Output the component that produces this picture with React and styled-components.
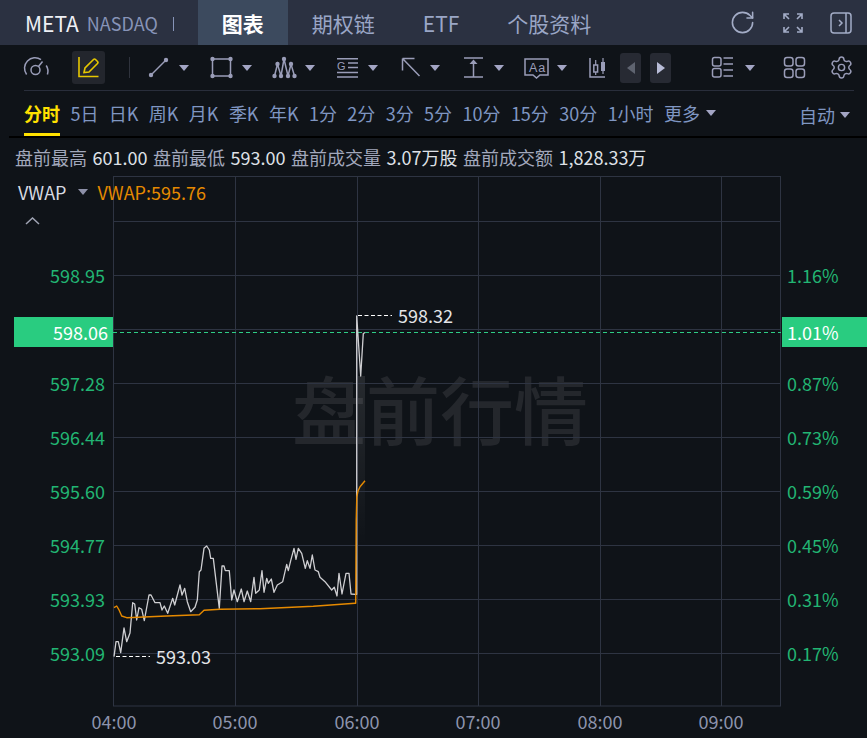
import React from "react";
import styled, { createGlobalStyle } from "styled-components";
import { RotateCw, Settings } from "lucide-react";

const GlobalStyle = createGlobalStyle`
  html, body {
    margin: 0;
    padding: 0;
    background: #0f1318;
  }
  body {
    font-family: "Noto Sans CJK SC", "Noto Sans", sans-serif;
  }
`;

const Page = styled.div`
  width: 867px;
  height: 738px;
  overflow: hidden;
  background: #0f1318;
`;

const TopBar = styled.div`
  height: 45px;
  display: flex;
  align-items: center;
  background: #2b3141;
  padding-left: 25px;
`;

const Symbol = styled.span`
  font-size: 21px;
  color: #eef0f5;
`;

const Market = styled.span`
  font-size: 18px;
  color: #8794b8;
  margin-left: 8px;
`;

const Divider = styled.span`
  width: 1px;
  height: 14px;
  background: #8794b8;
  margin: 2px 24px 0 15px;
`;

const Tab = styled.div`
  height: 45px;
  padding: 0 24px;
  display: flex;
  align-items: center;
  font-size: 21px;
  font-weight: ${(props) => (props.$active ? 700 : 400)};
  color: ${(props) => (props.$active ? "#ffffff" : "#9aa6c6")};
  background: ${(props) => (props.$active ? "#3c4a5e" : "transparent")};
`;

const TopIcons = styled.div`
  margin-left: auto;
  display: flex;
  align-items: center;
  gap: 27px;
  padding-right: 15px;
  color: #a3acc6;
`;

const Toolbar = styled.div`
  height: 45px;
  display: flex;
  align-items: center;
  padding-left: 23px;
  color: #9a9db8;
`;

const ToolSvg = styled.svg`
  display: block;
  flex: none;
  margin-left: ${(props) => props.$gap || 0}px;
`;

const ActiveTool = styled.div`
  width: 33px;
  height: 33px;
  flex: none;
  margin-left: 22px;
  border-radius: 3px;
  background: #23262d;
  color: #e6c700;
`;

const ToolSep = styled.span`
  width: 1px;
  height: 21px;
  flex: none;
  margin-left: 24px;
  background: #2f333d;
`;

const Caret = styled.span`
  flex: none;
  width: 0;
  height: 0;
  margin-left: ${(props) => props.$gap || 0}px;
  border-left: 5px solid transparent;
  border-right: 5px solid transparent;
  border-top: 6px solid ${(props) => props.$color || "#a3a5c4"};
`;

const StepButton = styled.div`
  width: 21px;
  height: 30px;
  flex: none;
  margin-left: ${(props) => props.$gap}px;
  display: flex;
  align-items: center;
  justify-content: center;
  border-radius: 3px;
  background: #272a33;
`;

const StepArrow = styled.span`
  width: 0;
  height: 0;
  border-top: 6.5px solid transparent;
  border-bottom: 6.5px solid transparent;
  border-right: ${(props) => (props.$left ? "8px solid #5f6470" : "none")};
  border-left: ${(props) => (props.$left ? "none" : "8px solid #b9bdd8")};
`;

const PeriodRow = styled.div`
  position: relative;
  height: 46px;
  display: flex;
  align-items: center;
  padding: 0 17px 0 24px;
  gap: 10.4px;
  font-size: 18px;
  color: #7f96c2;

  &::before {
    content: "";
    position: absolute;
    top: 0;
    left: 24px;
    right: 13px;
    height: 1px;
    background: #292e3b;
  }
`;

const Period = styled.div`
  height: 46px;
  line-height: 46px;
  box-sizing: border-box;
  white-space: nowrap;
  color: ${(props) => (props.$active ? "#ffe100" : "inherit")};
  font-weight: ${(props) => (props.$active ? 700 : 400)};
  border-bottom: 3px solid ${(props) => (props.$active ? "#ffe100" : "transparent")};
`;

const AutoSwitch = styled.div`
  margin-left: auto;
  display: flex;
  align-items: center;
  gap: 5px;
  padding-top: 3px;
`;

const Rule = styled.div`
  height: 2px;
  margin-left: 9px;
  background: #000000;
`;

const InfoRow = styled.div`
  height: 38px;
  display: flex;
  align-items: center;
  padding-left: 15px;
  font-size: 18px;
  white-space: nowrap;
  color: #a2a8bc;
`;

const InfoValue = styled.span`
  color: #dfe1e7;
  margin: 0 5.5px;
`;

const ChartPanel = styled.div`
  position: relative;
  height: 562px;
`;

const ChartSvg = styled.svg`
  display: block;
`;

const AxisText = styled.text`
  font-size: 18px;
  fill: ${(props) => props.$fill || "#22b573"};
  dominant-baseline: central;
`;

const Watermark = styled.text`
  font-size: 74px;
  font-weight: 500;
  letter-spacing: 0;
  fill: #24272c;
  dominant-baseline: central;
`;

const Legend = styled.div`
  position: absolute;
  top: 3px;
  left: 18px;
  display: flex;
  align-items: center;
  font-size: 18px;
  color: #d8dbe2;
`;

const LegendValue = styled.span`
  color: #e68a00;
  margin-left: 10px;
`;

const Collapse = styled.svg`
  position: absolute;
  top: 41px;
  left: 25px;
`;

const PriceBadge = styled.div`
  position: absolute;
  top: 141px;
  height: 30px;
  display: flex;
  align-items: center;
  font-size: 18px;
  color: #ffffff;
  background: #29cc80;
  box-sizing: border-box;
  left: ${(props) => props.$left}px;
  width: ${(props) => props.$width}px;
  justify-content: ${(props) => (props.$end ? "flex-end" : "flex-start")};
  padding: ${(props) => (props.$end ? "0 5px 0 0" : "0 0 0 5px")};
`;

const tabs = ["期权链", "ETF", "个股资料"];
const periods = ["5日", "日K", "周K", "月K", "季K", "年K", "1分", "2分", "3分", "5分", "10分", "15分", "30分", "1小时"];
const prices = [["598.95", 275], ["597.28", 383], ["596.44", 437], ["595.60", 491], ["594.77", 545], ["593.93", 599], ["593.09", 653]];
const percents = [["1.16%", 275], ["0.87%", 383], ["0.73%", 437], ["0.59%", 491], ["0.45%", 545], ["0.31%", 599], ["0.17%", 653]];
const gridY = [221, 275, 329, 383, 437, 491, 545, 599, 653];
const gridX = [235, 357, 478, 600, 721];
const times = [["04:00", 114], ["05:00", 235], ["06:00", 357], ["07:00", 478], ["08:00", 600], ["09:00", 721]];

const whiteLine =
  "114,656.7 116,641.7 118.3,641.7 120.7,652.7 124,628 126.7,641.7 130,633 132.7,602.7 134.7,604 136.7,620 139,607.7 141.7,609.3 144.3,620.7 149,595 151,595 155,602.7 160,602.7 162,610 164.3,606 167.7,613.3 172.7,598.3 174.7,605 180,585 182,595 184.7,588.3 187.3,601.7 190.7,611.7 195,607.3 197.3,600 199.3,571.7 201,570 204,548.3 206.7,546 209.3,550 210.7,558.3 213.3,558.3 219.3,608.3 222,566 224,566 225.3,570.7 229.3,570.7 231.7,600 234,590 237.3,601.7 241.3,589 244,601.7 247.3,591 250.7,601.7 254,577.3 255.7,593.3 259.3,590 262,570.7 264,592.3 266.7,578.3 268.3,583.3 271.3,579 274,592.3 277.3,585 282.7,581.7 286.7,564.3 288.3,570.7 290.7,560.7 294,548.3 296,559.3 298.3,548.3 301.7,553.3 305.3,568.3 307.3,560.7 310,568.3 312.3,555 315,570 318.3,571.7 320,577.3 325,581.7 331.7,590 334.3,587.3 337,596 339,573.3 342,594 346,573.3 349,573.3 351,594 355.5,594.3 356.7,594.3 356.7,316 360.7,376 363.3,333.5 365,332.7";
const vwapLine =
  "114,607.7 116.7,606 118.7,609.3 121.7,616 126.7,617.7 166.7,616 199.3,614.7 204,610.3 220,609.3 260,608.7 313.3,606.3 355,603.3 355.7,603.3 356.2,520 356.8,497 358,491 360,486.7 365,480.7";

const Icon = ({ x, w, gap, children }) => (
  <ToolSvg $gap={gap} width={w} height={45} viewBox={`${x} 45 ${w} 45`} fill="none" stroke="currentColor" strokeWidth="1.5">
    {children}
  </ToolSvg>
);

const dots = (points) =>
  points.map(([cx, cy]) => <circle key={`${cx}-${cy}`} cx={cx} cy={cy} r="2.2" fill="currentColor" stroke="none" />);

const Toolbox = () => (
  <Toolbar>
    <Icon x={23} w={27}>
      <path d="M26.6 74.5A10.5 10.5 0 0 1 41 59.6M46.2 65.5A10.5 10.5 0 0 1 47.4 74.5" />
      <circle cx="35.5" cy="70" r="4.5" />
      <path d="M38.5 66.5L42.5 61.5" />
    </Icon>
    <ActiveTool>
      <svg width="33" height="33" viewBox="72 51 33 33" fill="none" stroke="currentColor" strokeWidth="1.6">
        <path d="M79 57V76.5H98.5" />
        <path d="M84 72.5L85 68L93.5 59.5Q94.5 58.5 95.5 59.5L97.5 61.5Q98.5 62.5 97.5 63.5L89 72Z" />
      </svg>
    </ActiveTool>
    <ToolSep />
    <Icon x={148} w={22} gap={18}>
      <path d="M151 75L166 60" />
      {dots([[151, 75], [166, 60]])}
    </Icon>
    <Caret $gap={9} />
    <Icon x={210} w={24} gap={21}>
      <rect x="212.5" y="59" width="18" height="17" />
      {dots([[212.5, 59], [230.5, 59], [212.5, 76], [230.5, 76]])}
    </Icon>
    <Caret $gap={8} />
    <Icon x={272} w={25} gap={20}>
      <path d="M274.5 76L277.5 64L281 76L284 59L288 76L291 64L294.5 76" />
      {dots([[274.5, 76], [277.5, 64], [281, 76], [284, 59], [288, 76], [291, 64], [294.5, 76]])}
    </Icon>
    <Caret $gap={8} />
    <Icon x={336} w={23} gap={21}>
      <path d="M337 58.7H358M348 63H358M348 67.5H358M337 72.5H358M337 77H358" />
      <text x="337" y="70" fontSize="11" fill="currentColor" stroke="none" fontFamily="Liberation Sans">G</text>
    </Icon>
    <Caret $gap={9} />
    <Icon x={400} w={21} gap={22}>
      <path d="M402.5 58.5L419.5 76M402.5 58.5H414.5M402.5 58.5V70.5" />
    </Icon>
    <Caret $gap={9} />
    <Icon x={463} w={21} gap={23}>
      <path d="M464 58H483M464 77H483M473.5 62V77" />
      <path d="M473.5 59.5L477.5 64H469.5Z" fill="currentColor" stroke="none" />
    </Icon>
    <Caret $gap={10} />
    <Icon x={523} w={27} gap={19}>
      <path d="M525 59H548V75H540L536.5 78L533 75H525Z" />
      <text x="529" y="71.5" fontSize="12.5" fill="currentColor" stroke="none" fontFamily="Liberation Sans" letterSpacing="1">Aa</text>
    </Icon>
    <Caret $gap={7} />
    <Icon x={588} w={19} gap={21}>
      <path d="M590 58V77H605" />
      <path d="M595.7 60V75M603 58V74" strokeWidth="1.2" />
      <rect x="593.8" y="65" width="3.8" height="7" fill="#0f1318" />
      <rect x="601" y="62" width="4" height="9" fill="currentColor" stroke="none" />
    </Icon>
    <StepButton $gap={13}><StepArrow $left /></StepButton>
    <StepButton $gap={9}><StepArrow /></StepButton>
    <Icon x={711} w={23} gap={40}>
      <rect x="712.5" y="57.5" width="8.5" height="8.5" rx="2" />
      <rect x="712.5" y="68.5" width="8.5" height="8.5" rx="2" />
      <path d="M723.5 58H733M723.5 64H733M723.5 70H733M723.5 76H733" />
    </Icon>
    <Caret $gap={11} />
    <Icon x={783} w={23} gap={28}>
      <rect x="784.5" y="57.5" width="8.5" height="8.5" rx="2.5" />
      <rect x="796" y="57.5" width="8.5" height="8.5" rx="2.5" />
      <rect x="784.5" y="69" width="8.5" height="8.5" rx="2.5" />
      <rect x="796" y="69" width="8.5" height="8.5" rx="2.5" />
    </Icon>
    <Settings size={25} strokeWidth={1.4} style={{ marginLeft: 23, flex: "none" }} />
  </Toolbar>
);

const PriceChart = () => (
  <ChartPanel>
    <ChartSvg width="867" height="562" viewBox="0 176 867 562" fill="none">
      <defs>
        <linearGradient id="spikeFade" x1="0" y1="0" x2="0" y2="1">
          <stop offset="0" stopColor="#ffffff" stopOpacity="0.1" />
          <stop offset="1" stopColor="#ffffff" stopOpacity="0" />
        </linearGradient>
      </defs>
      <Watermark x="292" y="406">盘前行情</Watermark>
      <rect x="357" y="376" width="8" height="170" fill="url(#spikeFade)" />
      <rect x="113.5" y="176.5" width="667" height="529.5" stroke="#2e3442" />
      {gridY.map((y) => (
        <path key={y} d={`M113 ${y + 0.5}H780`} stroke="#2e3442" />
      ))}
      {gridX.map((x) => (
        <path key={x} d={`M${x + 0.5} 176V706`} stroke="#2e3442" />
      ))}
      <path d="M113 332.5H781" stroke="#2ecc85" strokeDasharray="4 3" />
      <polyline points={whiteLine} stroke="#cfcfd2" strokeWidth="1.3" strokeLinejoin="round" />
      <polyline points={vwapLine} stroke="#e68a00" strokeWidth="1.4" strokeLinejoin="round" />
      <path d="M358 315.5H392" stroke="#ffffff" strokeDasharray="4 2.5" />
      <path d="M116 656.5H150" stroke="#ffffff" strokeDasharray="4 2.5" />
      <AxisText x="398" y="315" $fill="#e4e5e8">598.32</AxisText>
      <AxisText x="156" y="656" $fill="#e4e5e8">593.03</AxisText>
      {prices.map(([label, y]) => (
        <AxisText key={label} x="105" y={y} textAnchor="end">{label}</AxisText>
      ))}
      {percents.map(([label, y]) => (
        <AxisText key={label} x="787" y={y}>{label}</AxisText>
      ))}
      {times.map(([label, x]) => (
        <AxisText key={label} x={x} y="721" textAnchor="middle" $fill="#8d93ad">{label}</AxisText>
      ))}
    </ChartSvg>
    <Legend>
      VWAP
      <Caret $gap={11} $color="#8d90a8" />
      <LegendValue>VWAP:595.76</LegendValue>
    </Legend>
    <Collapse width="15" height="8" viewBox="0 0 15 8" fill="none" stroke="#a0a4b4" strokeWidth="1.5">
      <path d="M1 7L7.5 1L14 7" />
    </Collapse>
    <PriceBadge $left={14} $width={99} $end>598.06</PriceBadge>
    <PriceBadge $left={782} $width={85}>1.01%</PriceBadge>
  </ChartPanel>
);

export default function App() {
  return (
    <Page>
      <GlobalStyle />
      <TopBar>
        <Symbol>META</Symbol>
        <Market>NASDAQ</Market>
        <Divider />
        <Tab $active>图表</Tab>
        {tabs.map((name) => (
          <Tab key={name}>{name}</Tab>
        ))}
        <TopIcons>
          <RotateCw size={27} strokeWidth={1.4} />
          <svg width="20" height="20" viewBox="0 0 20 20" fill="none" stroke="currentColor" strokeWidth="1.6">
            <path d="M1 6V1H6M1 1L6 6M14 1H19V6M19 1L14 6M1 14V19H6M1 19L6 14M14 19H19V14M19 19L14 14" />
          </svg>
          <svg width="22" height="22" viewBox="0 0 22 22" fill="none" stroke="currentColor" strokeWidth="1.5">
            <rect x="1" y="1" width="20" height="20" rx="3" />
            <path d="M16 1V21M9 8L12 11L9 14" />
          </svg>
        </TopIcons>
      </TopBar>
      <Toolbox />
      <PeriodRow>
        <Period $active>分时</Period>
        {periods.map((name) => (
          <Period key={name}>{name}</Period>
        ))}
        <Period>更多</Period>
        <Caret $gap={-4} $color="#a3a5c4" />
        <AutoSwitch>
          自动
          <Caret />
        </AutoSwitch>
      </PeriodRow>
      <Rule />
      <InfoRow>
        盘前最高<InfoValue>601.00</InfoValue>
        盘前最低<InfoValue>593.00</InfoValue>
        盘前成交量<InfoValue>3.07万股</InfoValue>
        盘前成交额<InfoValue>1,828.33万</InfoValue>
      </InfoRow>
      <PriceChart />
    </Page>
  );
}
